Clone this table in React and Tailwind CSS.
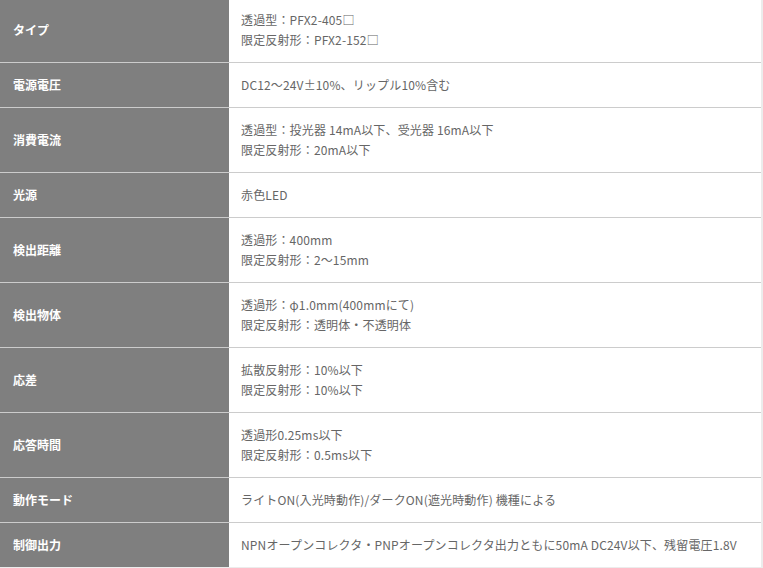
const specs = [
  { label: 'タイプ', lines: ['透過型：PFX2-405□', '限定反射形：PFX2-152□'] },
  { label: '電源電圧', lines: ['DC12〜24V±10%、リップル10%含む'] },
  { label: '消費電流', lines: ['透過型：投光器 14mA以下、受光器 16mA以下', '限定反射形：20mA以下'] },
  { label: '光源', lines: ['赤色LED'] },
  { label: '検出距離', lines: ['透過形：400mm', '限定反射形：2〜15mm'] },
  { label: '検出物体', lines: ['透過形：φ1.0mm(400mmにて)', '限定反射形：透明体・不透明体'] },
  { label: '応差', lines: ['拡散反射形：10%以下', '限定反射形：10%以下'] },
  { label: '応答時間', lines: ['透過形0.25ms以下', '限定反射形：0.5ms以下'] },
  { label: '動作モード', lines: ['ライトON(入光時動作)/ダークON(遮光時動作) 機種による'] },
  { label: '制御出力', lines: ['NPNオープンコレクタ・PNPオープンコレクタ出力ともに50mA DC24V以下、残留電圧1.8V'] },
];

export default function App() {
  return (
    <div className="min-h-screen bg-[#ececec] font-['Noto_Sans_CJK_JP','Noto_Sans',sans-serif]">
      <div className="w-[761px] bg-white overflow-hidden h-[567px]">
        <div className="-mt-[2px]">
          {specs.map((row, i) => (
            <div key={i} className="flex border-b border-[#cccccc]">
              <div className="w-[229px] shrink-0 bg-[#7f7f7f] flex items-center pl-[13px] text-[12px] font-bold text-white">
                {row.label}
              </div>
              <div className="flex-1 py-[12px] pl-[12px] text-[12px] leading-[20px] tracking-[0.15px] text-[#666666]">
                {row.lines.map((l, j) => (
                  <div key={j}>{l}</div>
                ))}
              </div>
            </div>
          ))}
        </div>
      </div>
    </div>
  );
}
